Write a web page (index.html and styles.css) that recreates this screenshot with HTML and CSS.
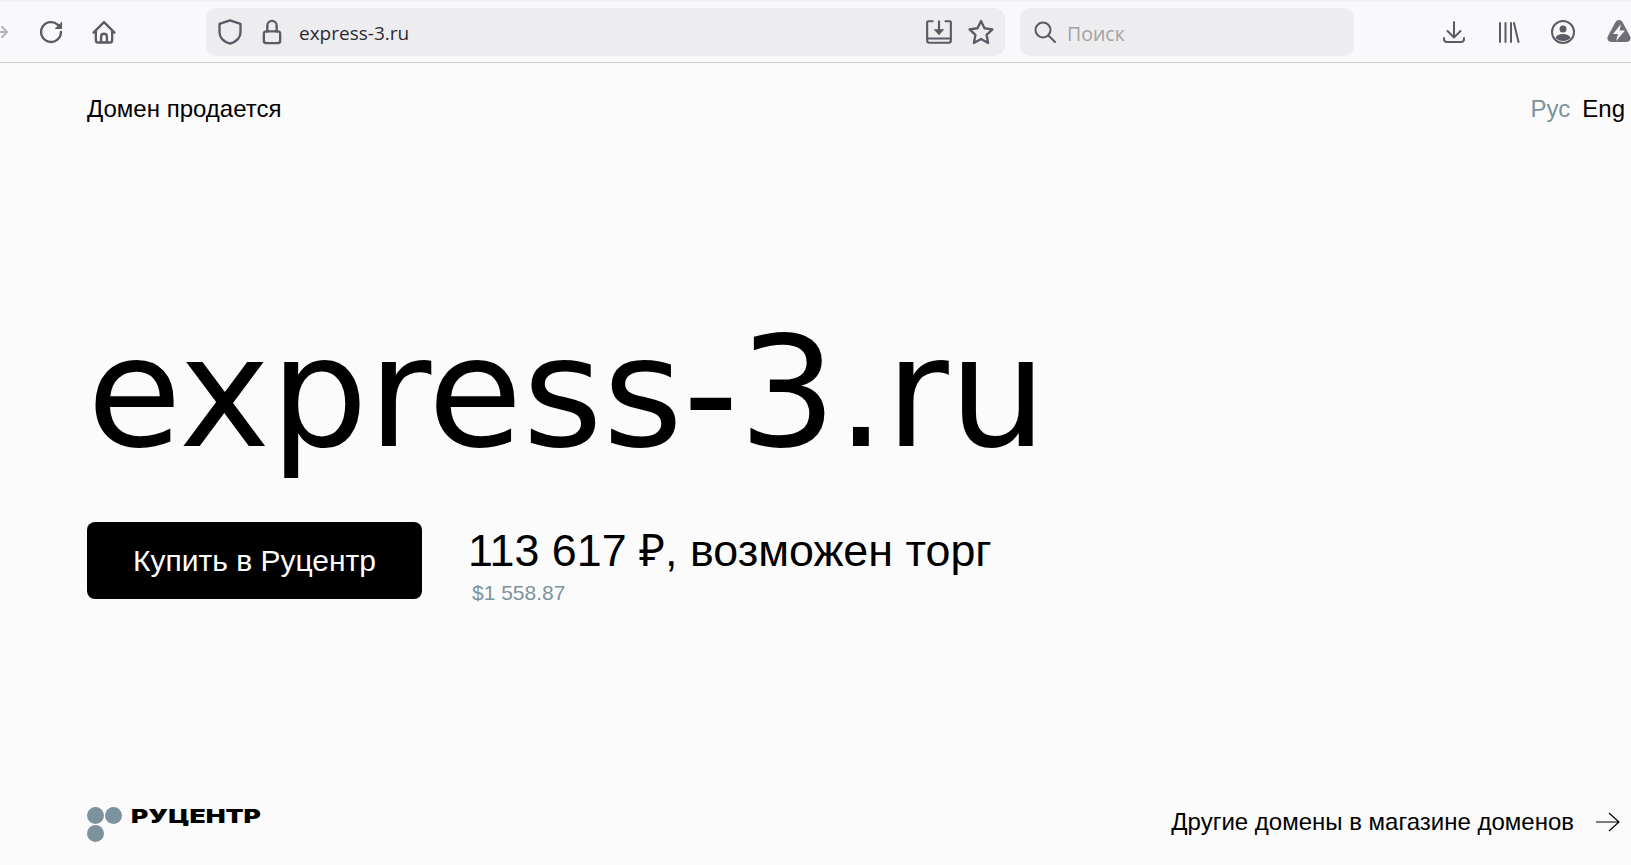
FILE: index.html
```html
<!DOCTYPE html>
<html lang="ru">
<head>
  <meta charset="UTF-8" />
  <meta name="viewport" content="width=device-width, initial-scale=1.0" />
  <title>express-3.ru</title>
  <link rel="stylesheet" href="styles.css">
</head>
<body>
  <!-- Browser toolbar -->
  <div class="toolbar">
    <div class="nav-icons">
      <svg class="icon forward" width="16" height="16" viewBox="0 0 16 16"><path d="M1 8h12M8 3l5 5-5 5"/></svg>
      <svg class="icon" width="28" height="28" viewBox="0 0 24 24"><path d="M20.500 12a8.500 8.500 0 1 1-2.600-6.100L20 8"/><path class="solid" d="M21.500 3v6.500H15z"/></svg>
      <svg class="icon" width="28" height="28" viewBox="0 0 24 24"><path d="M3 12.500 12 3.500l9 9M5 11v8a2 2 0 0 0 2 2h10a2 2 0 0 0 2-2v-8M9.500 21v-5a2.500 2.500 0 0 1 5 0v5"/></svg>
    </div>
    <div class="urlbar">
      <svg class="icon" width="28" height="28" viewBox="0 0 24 24"><path d="M12 2 3 5v7c0 5 4 8.500 9 10 5-1.500 9-5 9-10V5z"/></svg>
      <svg class="icon lock" width="28" height="28" viewBox="0 0 24 24"><rect x="5" y="11.500" width="14" height="10" rx="2"/><path d="M8 11.500V6.500a4 4 0 0 1 8 0v5"/></svg>
      <span class="url">express-3.ru</span>
      <svg class="icon" width="28" height="26" viewBox="0 0 26 24"><path d="M7 2H3a1 1 0 0 0-1 1v17a2 2 0 0 0 2 2h18a2 2 0 0 0 2-2V3a1 1 0 0 0-1-1h-4M2 18h22M13 2v9"/><path class="solid" d="M8 9.500h10L13 15z"/></svg>
      <svg class="icon star" width="28" height="28" viewBox="0 0 24 24"><path d="M12 2.500l3 6.300 6.800.9-5 4.800 1.300 6.900-6.100-3.400-6.100 3.400 1.300-6.900-5-4.800 6.800-.9z"/></svg>
    </div>
    <div class="searchbar">
      <svg class="icon" width="24" height="24" viewBox="0 0 24 24"><circle cx="10" cy="10" r="7.500"/><path d="M15.500 15.500 22 22"/></svg>
      <span class="search-text">Поиск</span>
    </div>
    <div class="tool-icons">
      <svg class="icon" width="24" height="24" viewBox="0 0 24 24"><path d="M12 2v15M5.500 11l6.500 6.500 6.500-6.500M2 18v1a3 3 0 0 0 3 3h14a3 3 0 0 0 3-3v-1"/></svg>
      <svg class="icon" width="24" height="24" viewBox="0 0 24 24"><path d="M4 3v19M9.500 3v19M15 3v19M18 3l4.500 19"/></svg>
      <svg class="icon" width="26" height="26" viewBox="0 0 26 26"><circle cx="13" cy="13" r="11"/><circle class="solid" cx="13" cy="10" r="3.500"/><path class="solid" d="M5.500 19c1-3 4-4 7.500-4s6.500 1 7.500 4c-2 2-4.500 3-7.500 3s-5.500-1-7.500-3z"/></svg>
      <svg class="addon" width="26" height="26" viewBox="0 0 26 26"><path d="M13 1c2 0 3 1 4 3l7 13c1.500 3 0 6-3 6H5c-3 0-4.500-3-3-6L9 4c1-2 2-3 4-3z" fill="#6f6f78"/><path d="M15 5 7 15h5L10 22l9-10.500h-5.500z" fill="#f9f9fb"/></svg>
    </div>
  </div>

  <!-- Page -->
  <div class="page">
    <div class="top-row">
      <span>Домен продается</span>
      <div class="lang">
        <span class="lang-current">Рус</span>
        <span>Eng</span>
      </div>
    </div>

    <div class="hero">
      <h1 class="domain">express-3.ru</h1>
      <div class="offer">
        <a class="buy" href="#">Купить в Руцентр</a>
        <div class="price">
          <div class="price-main">113 617 ₽, возможен торг</div>
          <div class="price-usd">$1 558.87</div>
        </div>
      </div>
    </div>

    <div class="bottom-row">
      <div class="logo">
        <div class="dots">
          <i></i><i></i><i></i>
        </div>
        <span class="logo-text">РУЦЕНТР</span>
      </div>
      <div class="shop-link">
        <span>Другие домены в магазине доменов</span>
        <svg class="arrow" width="26" height="20" viewBox="0 0 26 20"><path d="M1 10h23M14 1l10 9-10 9"/></svg>
      </div>
    </div>
  </div>
</body>
</html>
```

FILE: styles.css
```css
* {
  box-sizing: border-box;
}

body {
  margin: 0;
  height: 865px;
  overflow: hidden;
  display: flex;
  flex-direction: column;
  background-color: #fbfbfb;
  color: #000;
  font-family: "Liberation Sans", Arial, sans-serif;
}

/* Browser toolbar */
.toolbar {
  height: 63px;
  flex: none;
  display: flex;
  align-items: center;
  background-color: #f9f9fb;
  border-top: 2px solid #f0f0f4;
  border-bottom: 1px solid #d0d0d2;
  overflow: hidden;
}

.icon {
  flex: none;
  fill: none;
  stroke: #5b5b66;
  stroke-width: 2;
  stroke-linecap: round;
  stroke-linejoin: round;
}

.icon .solid {
  fill: #5b5b66;
  stroke: none;
}

.nav-icons {
  width: 212px;
  flex: none;
  display: flex;
  align-items: center;
  margin-left: -6px;
  gap: 25px;
}

.forward {
  margin-right: 2px;
  stroke: #b4b4ba;
}

.urlbar {
  width: 799px;
  height: 48px;
  flex: none;
  display: flex;
  align-items: center;
  padding: 0 10px 0 10px;
  background-color: #ededf0;
  border-radius: 10px;
}

.lock {
  margin-left: 14px;
}

.url {
  flex: 1;
  margin: 2px 0 0 13px;
  font-family: "Open Sans", sans-serif;
  font-size: 19px;
  color: #2b2a33;
}

.star {
  margin-left: 14px;
}

.searchbar {
  width: 334px;
  height: 48px;
  flex: none;
  display: flex;
  align-items: center;
  gap: 10px;
  margin-left: 15px;
  padding-left: 13px;
  background-color: #ededf0;
  border-radius: 10px;
}

.search-text {
  margin-top: 2px;
  font-family: "Open Sans", sans-serif;
  font-size: 19.500px;
  color: #a3a1a4;
}

.tool-icons {
  flex: none;
  display: flex;
  align-items: center;
  gap: 30px;
  margin-left: 88px;
}

.addon {
  flex: none;
}

/* Page */
.page {
  flex: 1;
  display: flex;
  flex-direction: column;
  padding: 32px 6px 23px 87px;
}

.top-row {
  display: flex;
  justify-content: space-between;
  font-size: 24px;
  line-height: 28px;
}

.lang {
  display: flex;
  gap: 12px;
}

.lang-current {
  color: #7c939e;
}

.hero {
  flex: 1;
  padding-top: 175px;
}

.domain {
  margin: 0;
  font-family: "DejaVu Sans", Verdana, sans-serif;
  font-weight: 400;
  font-size: 154px;
  line-height: 190px;
}

.offer {
  display: flex;
  margin-top: 34px;
  gap: 46px;
}

.buy {
  width: 335px;
  height: 77px;
  display: flex;
  align-items: center;
  justify-content: center;
  background-color: #000;
  border-radius: 8px;
  color: #fff;
  font-size: 30px;
  text-decoration: none;
}

.price-main {
  font-size: 44.800px;
  line-height: 52px;
  margin-top: 2px;
}

.price-usd {
  margin-left: 4px;
  margin-top: 3px;
  font-size: 21px;
  line-height: 28px;
  color: #7c939e;
}

.bottom-row {
  display: flex;
  justify-content: space-between;
  align-items: center;
}

.logo {
  display: flex;
  align-items: flex-start;
  gap: 9px;
}

.dots {
  width: 35px;
  display: flex;
  flex-wrap: wrap;
  gap: 1px;
}

.dots i {
  width: 17px;
  height: 17px;
  border-radius: 50%;
  background-color: #7c939e;
}

.logo-text {
  margin-top: 2px;
  font-family: Inter, sans-serif;
  font-weight: 900;
  font-size: 19px;
  line-height: 16px;
  transform: scaleX(1.39);
  transform-origin: left top;
}

.shop-link {
  display: flex;
  align-items: center;
  gap: 21px;
  margin: 0 4px 6px 0;
  font-size: 24px;
}

.arrow {
  fill: none;
  stroke: #000;
  stroke-width: 1.200;
}
```
